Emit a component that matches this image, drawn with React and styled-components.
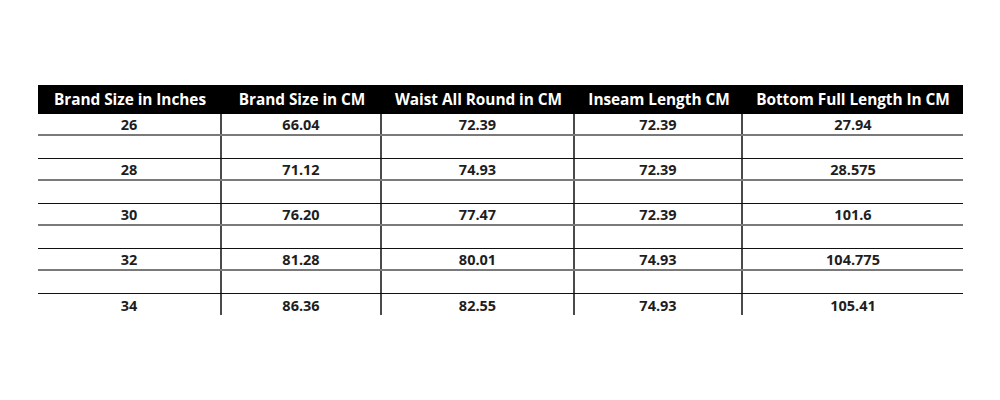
import React from "react";
import styled, { createGlobalStyle } from "styled-components";

const Global = createGlobalStyle`
  html, body { margin: 0; padding: 0; background: #fff; }
  body { font-family: "Open Sans", "Noto Sans", "Liberation Sans", sans-serif; }
`;

const Page = styled.div`
  width: 1000px;
  height: 400px;
  padding: 85px 0 0 38px;
  box-sizing: border-box;
`;

const Table = styled.div`
  width: 925px;
  display: flex;
  flex-direction: column;
`;

const COLS = "184px 160px 193px 168px 220px";

const HeaderRow = styled.div`
  display: grid;
  grid-template-columns: ${COLS};
  height: 29px;
  background: #000;
`;

const HeaderCell = styled.div`
  display: flex;
  align-items: center;
  justify-content: center;
  color: #fff;
  font-weight: 700;
  font-size: 15.4px;
  letter-spacing: -0.05px;
  white-space: nowrap;
`;

const Row = styled.div`
  display: grid;
  grid-template-columns: ${COLS};
  box-sizing: border-box;
  height: ${(p) => (p.$empty ? 23 : p.$last ? 21 : 22)}px;
  border-bottom: ${(p) =>
    p.$last ? "none" : p.$empty ? "1.5px solid #111" : "2px solid #7a7a7a"};
`;

const Cell = styled.div`
  display: flex;
  align-items: center;
  justify-content: center;
  padding-top: 1px;
  font-weight: 700;
  font-size: 14.5px;
  color: #1e1e1e;
  border-right: ${(p) => (p.$lastCol ? "none" : "2px solid #4a4a4a")};
`;

const headers = [
  "Brand Size in Inches",
  "Brand Size in CM",
  "Waist All Round in CM",
  "Inseam Length CM",
  "Bottom Full Length In CM",
];

const data = [
  ["26", "66.04", "72.39", "72.39", "27.94"],
  ["28", "71.12", "74.93", "72.39", "28.575"],
  ["30", "76.20", "77.47", "72.39", "101.6"],
  ["32", "81.28", "80.01", "74.93", "104.775"],
  ["34", "86.36", "82.55", "74.93", "105.41"],
];

export default function App() {
  const rows = [];
  data.forEach((r, i) => {
    const last = i === data.length - 1;
    rows.push(
      <Row key={`d${i}`} $last={last}>
        {r.map((v, j) => (
          <Cell key={j} $lastCol={j === 4}>
            {v}
          </Cell>
        ))}
      </Row>
    );
    if (!last) {
      rows.push(
        <Row key={`e${i}`} $empty>
          {r.map((_, j) => (
            <Cell key={j} $lastCol={j === 4} />
          ))}
        </Row>
      );
    }
  });
  return (
    <Page>
      <Global />
      <Table>
        <HeaderRow>
          {headers.map((h) => (
            <HeaderCell key={h}>{h}</HeaderCell>
          ))}
        </HeaderRow>
        {rows}
      </Table>
    </Page>
  );
}
